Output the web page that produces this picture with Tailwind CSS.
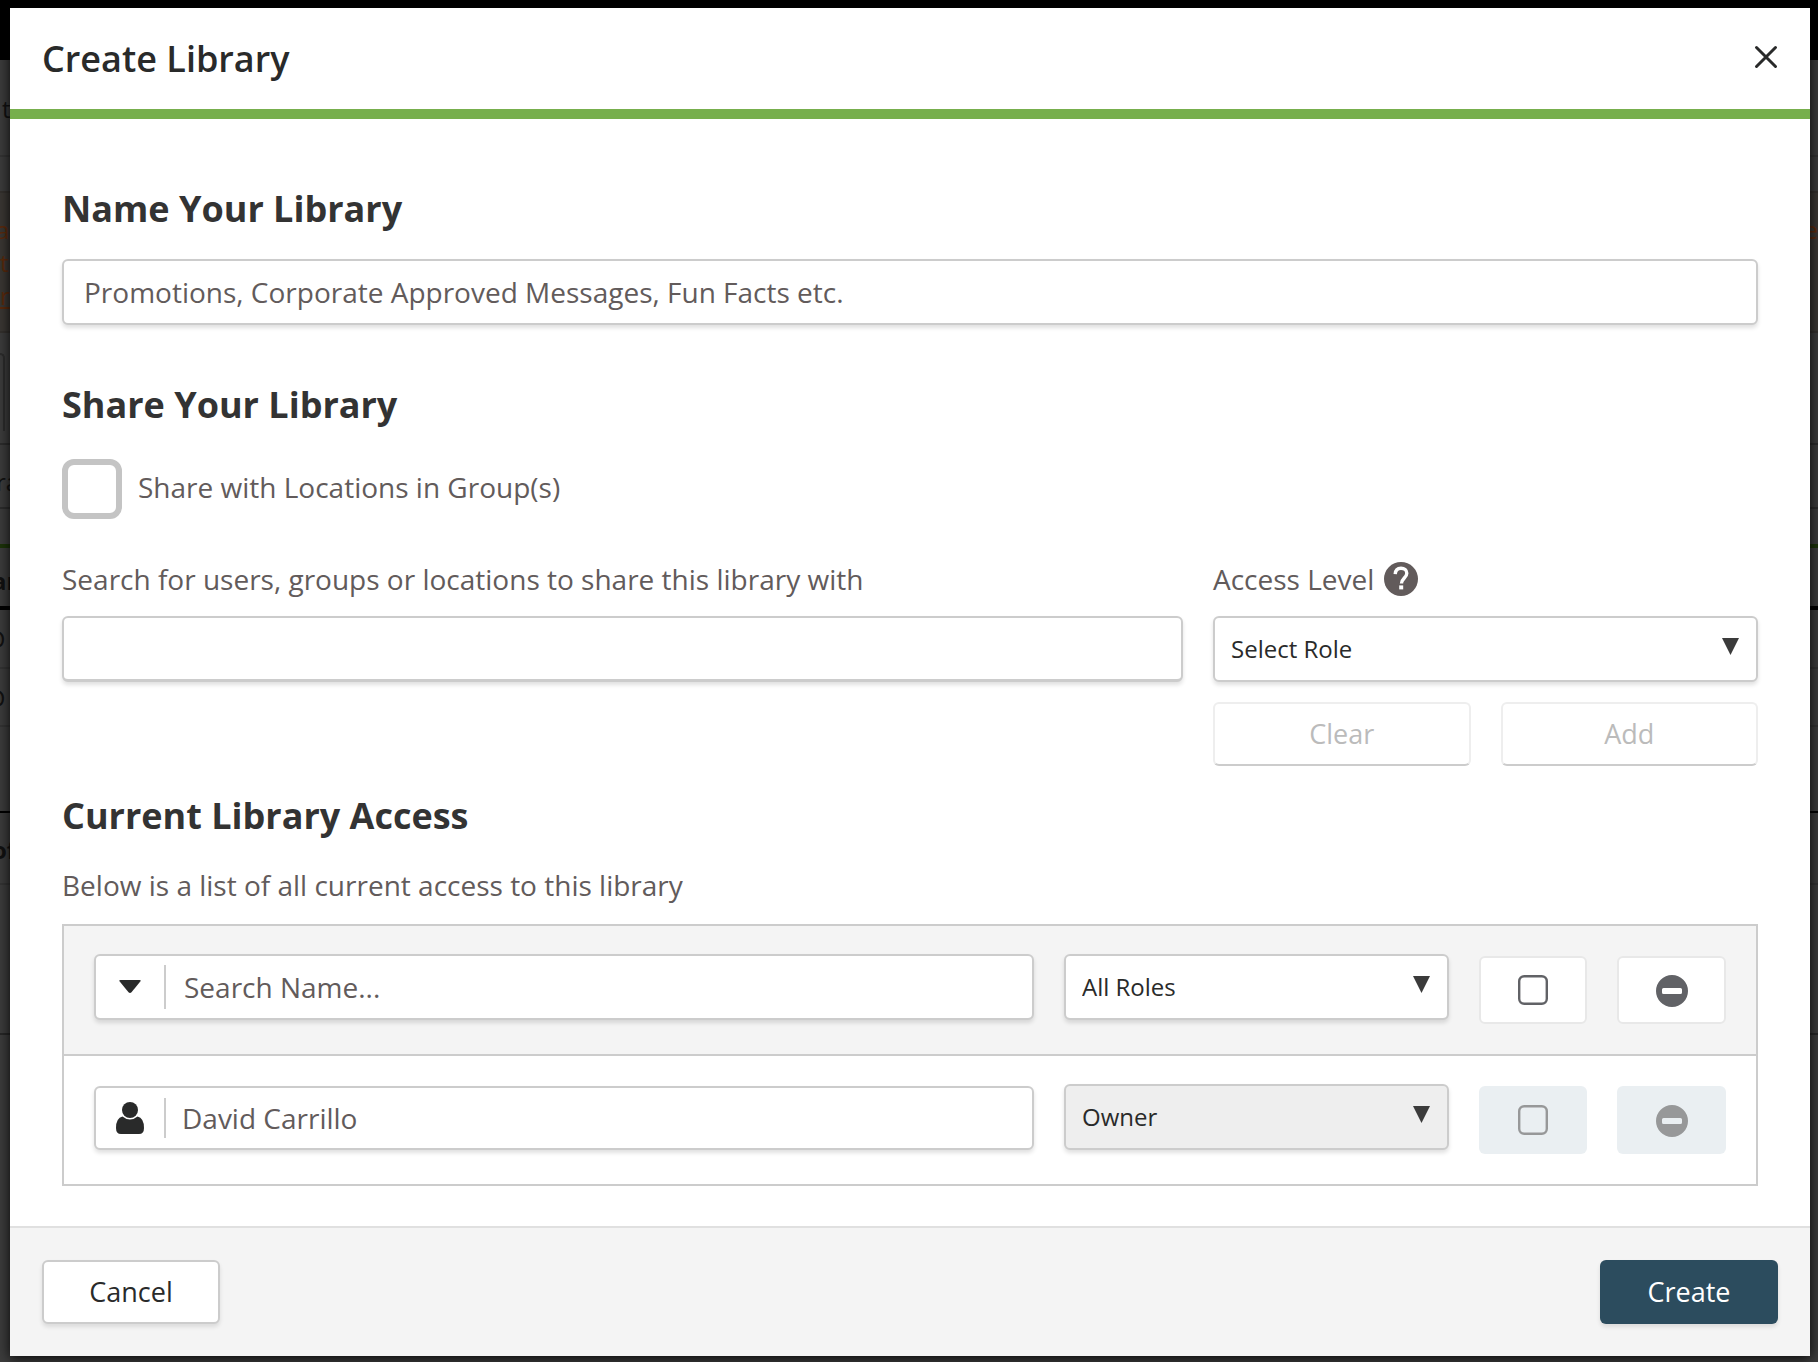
<!DOCTYPE html>
<html lang="en">
<head>
  <meta charset="UTF-8" />
  <meta name="viewport" content="width=device-width, initial-scale=1.0" />
  <title>Create Library</title>
  <script src="https://cdn.jsdelivr.net/npm/@tailwindcss/browser@4"></script>
  <style>
    body {
      font-family: 'Open Sans', 'Noto Sans', sans-serif;
    }
  </style>
</head>
<body class="relative min-h-screen overflow-x-hidden bg-[#3c3c3c] text-[28px] text-[#625b5b]">

  <!-- Dimmed page behind the dialog -->
  <div class="absolute inset-0 overflow-hidden text-2xl leading-[33px] text-[#111]" aria-hidden="true">
    <div class="h-[60px] bg-black"></div>
    <div class="h-[97px] border-b-2 border-[#333] pt-8 pl-[2px]">t</div>
    <div class="h-[34px]"></div>
    <div class="flex h-[142px] justify-between border-y-2 border-[#33302d] bg-[#3a3733] pt-5 text-[#5c2a0c]">
      <div>
        <p class="-ml-1">a</p>
        <p>t</p>
        <p class="underline">r</p>
      </div>
      <p>e</p>
    </div>
    <div class="mt-5 h-[78px] w-[5px] rounded-tr-md border-t-2 border-r-2 border-[#2c2c2c]"></div>
    <div class="mt-3 h-[66px] border-y-2 border-[#2c2c2c] pt-5"><p class="-ml-1">ra</p></div>
    <div class="h-[35px]"></div>
    <div class="h-[62px] border-t-4 border-[#1c3309] pt-4 font-bold"><p class="-ml-2">ar</p></div>
    <div class="h-[61px] border-t-4 border-black pt-3"><p class="-ml-3">D</p></div>
    <div class="h-[58px] border-t-2 border-[#333] pt-3"><p class="-ml-3">D</p></div>
    <div class="h-[86px] border-t-2 border-[#333]"></div>
    <div class="h-[74px] border-y-2 border-t-black border-b-[#333] pt-5 font-bold"><p class="-ml-2">of</p></div>
    <div class="h-[150px] border-b-2 border-[#262626]"></div>
  </div>

  <!-- Create library dialog -->
  <form class="relative w-full pt-2 pr-2 pb-[6px] pl-[10px]" onsubmit="return false">
    <div role="dialog" aria-labelledby="dialogTitle" class="w-full bg-white shadow-[0_2px_12px_rgba(0,0,0,0.9)]">

      <!-- Header -->
      <div class="flex h-[111px] items-center justify-between border-b-10 border-[#77af4d] px-8">
        <h1 id="dialogTitle" class="text-[36px] leading-[48px] font-semibold text-[#292a2a]">Create Library</h1>
        <button type="button" aria-label="Close" class="pb-[3px] text-[#292a2a]">
          <svg width="24" height="24" viewBox="0 0 24 24" fill="none" stroke="currentColor" stroke-width="3" stroke-linecap="round">
            <path d="M2.500 2.500 21.500 21.500M21.500 2.500 2.500 21.500" />
          </svg>
        </button>
      </div>

      <!-- Body -->
      <div class="px-[52px] pt-[66px] pb-10">
        <h2 class="text-[36px] leading-[48px] font-bold text-[#333]"><label for="libraryName">Name Your Library</label></h2>
        <input type="text" id="libraryName" placeholder="Promotions, Corporate Approved Messages, Fun Facts etc." class="mt-[26px] block h-[66px] w-full rounded-md border-2 border-[#ccc] bg-white px-5 shadow-[0_3px_4px_rgba(0,0,0,0.12)] placeholder:text-[#625b5b] placeholder:opacity-100">

        <h2 class="mt-14 text-[36px] leading-[48px] font-bold text-[#333]">Share Your Library</h2>
        <div class="mt-[30px] flex items-center gap-4">
          <input type="checkbox" id="shareGroups" class="size-[60px] appearance-none rounded-xl border-6 border-[#c4c4c4] bg-white">
          <label for="shareGroups" class="pb-1">Share with Locations in Group(s)</label>
        </div>

        <div class="mt-[39px] flex items-start gap-[30px]">
          <div class="min-w-0 flex-1">
            <label for="shareSearch" class="block leading-[42px]">Search for users, groups or locations to share this library with</label>
            <input type="text" id="shareSearch" class="mt-4 block h-[66px] w-full rounded-md border-2 border-b-3 border-[#ccc] bg-white px-5 shadow-[0_3px_4px_rgba(0,0,0,0.12)]">
          </div>
          <div class="w-[545px]">
            <div class="flex h-[42px] items-center gap-[10px]">
              <label for="accessLevel">Access Level</label>
              <button type="button" aria-label="About access levels">
                <svg width="34" height="34" viewBox="0 0 34 34">
                  <circle cx="17" cy="17" r="17" fill="#625b5b" />
                  <path d="M11.200 12.200C11.400 8.200 13.700 6.200 17 6.200c3.400 0 5.800 2 5.800 5 0 4.600-5.300 5-5.300 10.400" fill="none" stroke="#fff" stroke-width="3.400" />
                  <rect x="15.200" y="23.400" width="4" height="4" fill="#fff" />
                </svg>
              </button>
            </div>
            <div class="relative mt-4">
              <select id="accessLevel" class="block h-[66px] w-full appearance-none rounded-md border-2 border-[#ccc] bg-white px-4 text-2xl text-[#292a2a] shadow-[0_3px_4px_rgba(0,0,0,0.12)]">
                <option>Select Role</option>
              </select>
              <svg class="pointer-events-none absolute top-[22px] right-[19px]" width="17" height="17" viewBox="0 0 17 17"><path d="M0 0h17L8.500 17z" fill="#3b3b3b" /></svg>
            </div>
            <div class="mt-5 grid grid-cols-2 gap-[30px]">
              <button type="button" disabled class="h-16 rounded-md border-2 border-[#eee] border-b-[#ccc] bg-white text-[27px] text-[#bbb]">Clear</button>
              <button type="button" disabled class="h-16 rounded-md border-2 border-[#eee] border-b-[#ccc] bg-white text-[27px] text-[#bbb]">Add</button>
            </div>
          </div>
        </div>

        <h2 class="mt-[26px] text-[36px] leading-[48px] font-bold text-[#333]">Current Library Access</h2>
        <p class="mt-6 leading-[42px]">Below is a list of all current access to this library</p>

        <div class="mt-[18px] border-2 border-[#ccc]">
          <!-- Filter row -->
          <div class="flex h-[130px] items-start gap-[30px] border-b-2 border-[#ccc] bg-[#f4f4f4] px-[30px] pt-7">
            <div class="flex h-[66px] min-w-0 flex-1 items-center rounded-md border-2 border-[#ccc] bg-white shadow-[0_3px_4px_rgba(0,0,0,0.12)]">
              <button type="button" aria-label="Filter type" class="flex h-11 w-[70px] items-center justify-center border-r-2 border-[#ccc]">
                <svg width="22" height="14" viewBox="0 0 22 14"><path d="M1.500 0h19q2 0 .8 1.600L12.500 12.300q-1.500 1.600-3 0L.7 1.600Q-.5 0 1.500 0z" fill="#292a2a" /></svg>
              </button>
              <input type="text" aria-label="Search Name" placeholder="Search Name..." class="h-full min-w-0 flex-1 px-[18px] outline-none placeholder:text-[#625b5b] placeholder:opacity-100">
            </div>
            <div class="relative w-[385px]">
              <select aria-label="Filter by role" class="block h-[66px] w-full appearance-none rounded-md border-2 border-[#ccc] bg-white px-4 text-2xl text-[#292a2a] shadow-[0_3px_4px_rgba(0,0,0,0.12)]">
                <option>All Roles</option>
              </select>
              <svg class="pointer-events-none absolute top-[22px] right-[19px]" width="17" height="17" viewBox="0 0 17 17"><path d="M0 0h17L8.500 17z" fill="#3b3b3b" /></svg>
            </div>
            <button type="button" aria-label="Select all" class="mt-[2px] flex h-[68px] w-[108px] items-center justify-center rounded-md border-2 border-[#e8e8e8] bg-white text-[#616266]">
              <svg width="30" height="30" viewBox="0 0 30 30" fill="none" stroke="currentColor" stroke-width="2.400"><rect x="1.200" y="1.200" width="27.600" height="27.600" rx="5" /></svg>
            </button>
            <button type="button" aria-label="Remove selected" class="mt-[2px] flex h-[68px] w-[109px] items-center justify-center rounded-md border-2 border-[#e8e8e8] bg-white pt-[2px] text-[#616266]">
              <svg width="32" height="32" viewBox="0 0 32 32"><path fill="currentColor" fill-rule="evenodd" d="M16 0a16 16 0 1 0 0 32a16 16 0 1 0 0-32zM7.500 13h17q1.500 0 1.500 1.500v3q0 1.500-1.500 1.500h-17Q6 19 6 17.500v-3Q6 13 7.500 13z" /></svg>
            </button>
          </div>

          <!-- Member row -->
          <div class="flex h-32 items-start gap-[30px] px-[30px] pt-7">
            <div class="mt-[2px] flex h-16 min-w-0 flex-1 items-center rounded-md border-2 border-[#ccc] bg-white shadow-[0_3px_4px_rgba(0,0,0,0.12)]">
              <div class="flex h-10 w-[70px] items-center justify-center border-r-2 border-[#ccc]">
                <svg width="28" height="32" viewBox="0 0 28 32" fill="#292a2a">
                  <ellipse cx="14" cy="8" rx="8" ry="8" />
                  <path d="M6.500 14.500Q10 17.500 14 17.500t7.500-3Q28 16 28 26q0 6-5 6H5q-5 0-5-6Q0 16 6.500 14.500z" />
                </svg>
              </div>
              <span class="px-4">David Carrillo</span>
            </div>
            <div class="relative w-[385px]">
              <select aria-label="Role of David Carrillo" disabled class="block h-[66px] w-full appearance-none rounded-md border-2 border-[#ccc] bg-[#eee] px-4 text-2xl text-[#292a2a] opacity-100 shadow-[0_3px_4px_rgba(0,0,0,0.12)]">
                <option>Owner</option>
              </select>
              <svg class="pointer-events-none absolute top-[22px] right-[19px]" width="17" height="17" viewBox="0 0 17 17"><path d="M0 0h17L8.500 17z" fill="#3b3b3b" /></svg>
            </div>
            <button type="button" disabled aria-label="Select David Carrillo" class="mt-[2px] flex h-[68px] w-[108px] items-center justify-center rounded-md bg-[#eaeff2] text-[#979899]">
              <svg width="30" height="30" viewBox="0 0 30 30" fill="none" stroke="currentColor" stroke-width="2.400"><rect x="1.200" y="1.200" width="27.600" height="27.600" rx="5" /></svg>
            </button>
            <button type="button" disabled aria-label="Remove David Carrillo" class="mt-[2px] flex h-[68px] w-[109px] items-center justify-center rounded-md bg-[#eaeff2] pt-[2px] text-[#979899]">
              <svg width="32" height="32" viewBox="0 0 32 32"><path fill="currentColor" fill-rule="evenodd" d="M16 0a16 16 0 1 0 0 32a16 16 0 1 0 0-32zM7.500 13h17q1.500 0 1.500 1.500v3q0 1.500-1.500 1.500h-17Q6 19 6 17.500v-3Q6 13 7.500 13z" /></svg>
            </button>
          </div>
        </div>
      </div>

      <!-- Footer -->
      <div class="flex justify-between border-t-2 border-[#e0e0e0] bg-[#f4f4f4] p-8">
        <button type="button" class="h-16 w-[178px] rounded-md border-2 border-[#ccc] bg-white text-[27px] text-[#292a2a] shadow-[0_3px_4px_rgba(0,0,0,0.1)]">Cancel</button>
        <button type="submit" class="h-16 w-[178px] rounded-md bg-[#2c4c5e] text-[27px] text-white shadow-[0_3px_4px_rgba(0,0,0,0.1)]">Create</button>
      </div>
    </div>
  </form>

</body>
</html>
